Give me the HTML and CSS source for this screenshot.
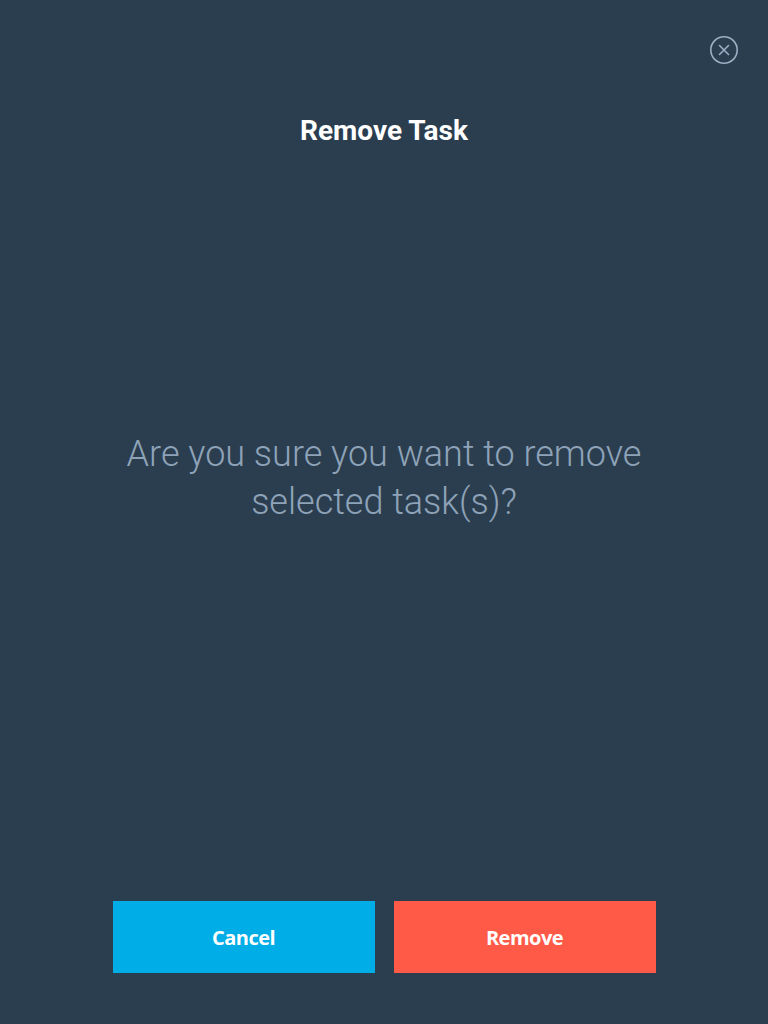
FILE: index.html
```html
<!DOCTYPE html>
<html lang="en">
<head>
<meta charset="utf-8">
<title>Remove Task</title>
<link rel="stylesheet" href="styles.css">
</head>
<body>
<div class="dialog">
  <button class="close" aria-label="Close">
    <svg width="30" height="30" viewBox="0 0 30 30">
      <circle cx="15" cy="15" r="13.2" fill="none" stroke="#9bb0c4" stroke-width="1.6"/>
      <path d="M10.5 10.5 L19.5 19.5 M19.5 10.5 L10.5 19.5" stroke="#9bb0c4" stroke-width="1.6" stroke-linecap="round"/>
    </svg>
  </button>
  <h1 class="title">Remove Task</h1>
  <div class="body">
    <p class="message">Are you sure you want to remove<br>selected task(s)?</p>
  </div>
  <div class="actions">
    <button class="btn btn-cancel">Cancel</button>
    <button class="btn btn-remove">Remove</button>
  </div>
</div>
</body>
</html>
```
FILE: styles.css
```css
html, body {
  margin: 0;
  padding: 0;
  height: 100%;
}
body {
  background: #2b3e50;
  font-family: Roboto, "Liberation Sans", sans-serif;
}
.dialog {
  position: relative;
  height: 100vh;
  display: flex;
  flex-direction: column;
  box-sizing: border-box;
  padding: 0 0 51px;
}
.close {
  position: absolute;
  top: 35px;
  right: 29px;
  width: 30px;
  height: 30px;
  padding: 0;
  border: 0;
  background: none;
  cursor: pointer;
}
.close svg { display: block; }
.title {
  margin: 0;
  padding-top: 114px;
  text-align: center;
  color: #ffffff;
  font-size: 28px;
  font-weight: 700;
  line-height: 34px;
}
.body {
  flex: 1;
  display: flex;
  align-items: center;
  justify-content: center;
  padding-bottom: 94px;
}
.message {
  margin: 0;
  text-align: center;
  color: #8ea3b8;
  font-size: 36px;
  font-weight: 300;
  line-height: 48px;
}
.actions {
  display: flex;
  justify-content: center;
  gap: 19px;
}
.btn {
  width: 262px;
  height: 72px;
  border: 0;
  color: #ffffff;
  font-family: "Open Sans", Roboto, sans-serif;
  font-size: 20px;
  font-weight: 700;
  letter-spacing: -0.5px;
  cursor: pointer;
}
.btn-cancel { background: #00ade6; }
.btn-remove { background: #ff5a48; }
```
